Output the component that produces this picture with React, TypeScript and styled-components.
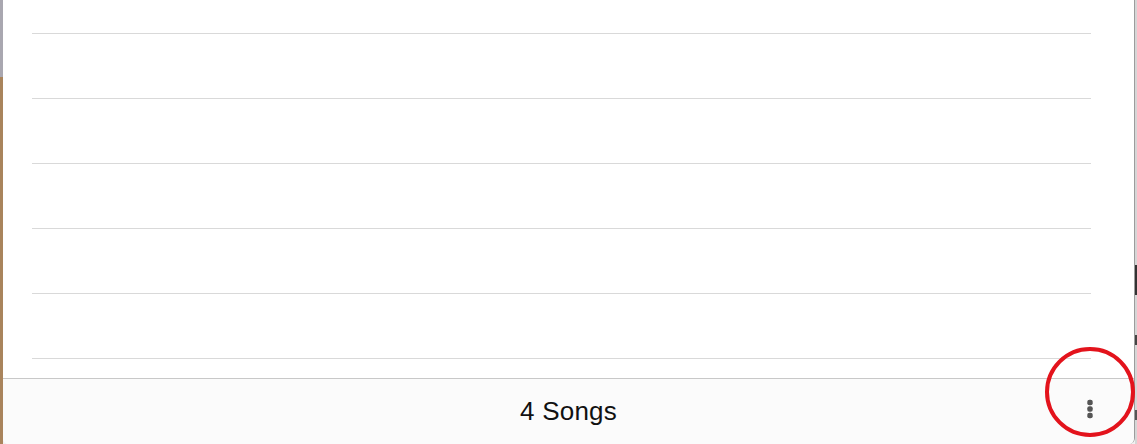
import * as React from 'react';
import styled, { createGlobalStyle } from 'styled-components';

const GlobalStyle = createGlobalStyle`
  html, body {
    margin: 0;
    padding: 0;
    width: 1137px;
    height: 444px;
    overflow: hidden;
    background: #f2f2f2;
  }
`;

const Backdrop = styled.div`
  display: flex;
  width: 1137px;
  height: 444px;
  font-family: "Liberation Sans", Arial, sans-serif;
`;

const LeftEdge = styled.div`
  width: 3px;
  background: linear-gradient(to bottom, #a9a7b0 0, #a9a7b0 77px, #a9845c 77px, #a9845c 100%);
`;

const RightEdge = styled.div`
  width: 2px;
  background: linear-gradient(
    to bottom,
    #d6d6d6 0,
    #d6d6d6 265px,
    #333 265px,
    #333 295px,
    #d6d6d6 295px,
    #d6d6d6 335px,
    #444 335px,
    #444 345px,
    #d6d6d6 345px,
    #d6d6d6 410px,
    #555 410px,
    #555 420px,
    #d6d6d6 420px
  );
`;

const Panel = styled.div`
  position: relative;
  flex: 1;
  display: flex;
  flex-direction: column;
  background: #ffffff;
  border-right: 1px solid #9c9c9c;
  border-radius: 0 0 6px 6px;
  overflow: hidden;
`;

const List = styled.div`
  flex: 1;
  display: flex;
  flex-direction: column;
  margin: 0 43px 0 29px;
`;

const Row = styled.div<{ $height: number }>`
  height: ${(p) => p.$height}px;
  flex-shrink: 0;
  border-bottom: 1px solid #d9d9d9;
`;

const Footer = styled.div`
  height: 65px;
  flex-shrink: 0;
  display: flex;
  align-items: center;
  justify-content: center;
  background: #fbfbfb;
  border-top: 1px solid #c8c8c8;
`;

const Count = styled.span`
  font-size: 26px;
  color: #111;
  letter-spacing: 0.2px;
`;

const MoreButton = styled.button`
  position: absolute;
  right: 38px;
  bottom: 24px;
  width: 12px;
  height: 22px;
  padding: 0;
  border: none;
  background: transparent;
  display: flex;
  align-items: center;
  justify-content: center;
`;

const Highlight = styled.div`
  position: absolute;
  left: 1045px;
  top: 347px;
  width: 82px;
  height: 82px;
  border: 4px solid #e3131c;
  border-radius: 50%;
  pointer-events: none;
`;

const rows = [33, 64, 64, 64, 64, 64];

export default function App() {
  return (
    <>
      <GlobalStyle />
      <Backdrop>
        <LeftEdge />
        <Panel>
          <List>
            {rows.map((h, i) => (
              <Row key={i} $height={h} />
            ))}
          </List>
          <Footer>
            <Count>4 Songs</Count>
          </Footer>
          <MoreButton aria-label="More">
            <svg width="8" height="22" viewBox="0 0 8 22">
              <rect x="1.3" y="1.8" width="5.4" height="5.4" rx="2" fill="#555" />
              <rect x="1.3" y="8.3" width="5.4" height="5.4" rx="2" fill="#555" />
              <rect x="1.3" y="14.8" width="5.4" height="5.4" rx="2" fill="#555" />
            </svg>
          </MoreButton>
        </Panel>
        <RightEdge />
      </Backdrop>
      <Highlight />
    </>
  );
}
